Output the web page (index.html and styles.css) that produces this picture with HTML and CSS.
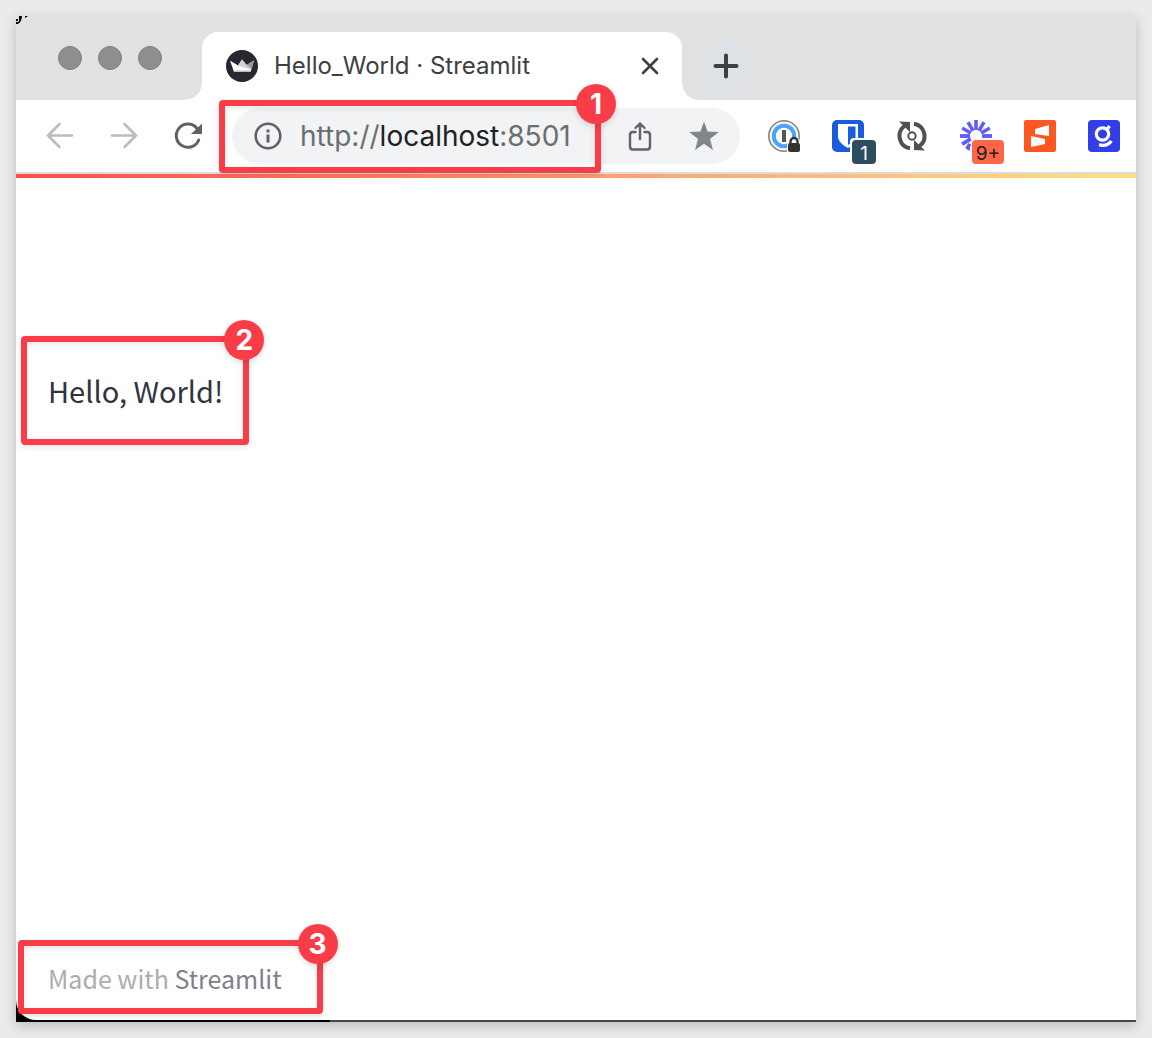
FILE: index.html
```html
<!DOCTYPE html>
<html lang="en">
<head>
<meta charset="utf-8">
<meta name="viewport" content="width=device-width, initial-scale=1">
<title>Hello_World · Streamlit</title>
<link rel="stylesheet" href="styles.css">
</head>
<body>
<div class="window">
  <svg class="window-corner" viewBox="0 0 14 12" aria-hidden="true"><path d="M0 0h14Q3 1 0 12Z" fill="#e4e4e4"/><path d="M3 0h3q0 5-4 8H0V6h2q2-1 1-3ZM0 3h2v2H0ZM9 0h3L9 2Z" fill="#000"/></svg>
  <header class="tab-strip">
    <div class="window-controls">
      <button class="dot" aria-label="Close window"></button>
      <button class="dot" aria-label="Minimize window"></button>
      <button class="dot" aria-label="Zoom window"></button>
    </div>
    <div class="tab">
      <svg class="favicon" viewBox="0 0 32 32" aria-hidden="true"><circle cx="16" cy="16" r="16" fill="#262730"/><path d="M4 10.500 12 15.500 16 9.500 20.500 15 28 10.500 24.500 22H8Z" fill="#fff"/><path d="M16 9.500 20.500 15 26 20 12 15.500Z" fill="#d2d2d2"/><path d="M20.500 15 28 10.500 25.500 19Z" fill="#98989c"/><path d="M8 20.500h17L24.500 22H8.500Z" fill="#b9c0bd"/></svg>
      <span class="tab-title">Hello_World · Streamlit</span>
      <button class="icon-button tab-close" aria-label="Close tab"><svg viewBox="0 0 32 32"><path d="M9 9l14 14M23 9 9 23" stroke="#3c4043" stroke-width="2.600" stroke-linecap="round"/></svg></button>
    </div>
    <button class="new-tab" aria-label="New tab"><svg viewBox="0 0 32 32"><path d="M16 5.500v21M5.500 16h21" stroke="#3c4043" stroke-width="4" stroke-linecap="round"/></svg></button>
  </header>
  <nav class="toolbar">
    <div class="nav-buttons">
      <button class="icon-button" aria-label="Back"><svg viewBox="0 0 32 32"><path d="M28 15.500H4M15.500 4 4 15.500 15.500 27" fill="none" stroke="#babcbe" stroke-width="2.600" stroke-linecap="round" stroke-linejoin="round"/></svg></button>
      <button class="icon-button" aria-label="Forward"><svg viewBox="0 0 32 32"><path d="M4 15.500H28M16.500 4 28 15.500 16.500 27" fill="none" stroke="#babcbe" stroke-width="2.600" stroke-linecap="round" stroke-linejoin="round"/></svg></button>
      <button class="icon-button" aria-label="Reload"><svg viewBox="0 0 32 32"><path d="M26.700 20A11.600 11.600 0 1 1 25 8.500" fill="none" stroke="#5f6368" stroke-width="3" stroke-linecap="round"/><path d="M30 3.500V14H19Z" fill="#5f6368"/></svg></button>
    </div>
    <div class="omnibox">
      <svg class="info" viewBox="0 0 28 28" aria-hidden="true"><circle cx="14" cy="14" r="12.300" fill="none" stroke="#5f6368" stroke-width="2.600"/><path d="M12.500 7.500h3v3h-3Zm0 5h3v8h-3Z" fill="#5f6368"/></svg>
      <div class="url" contenteditable="true" role="textbox" aria-label="Address" spellcheck="false">http://<span class="url-host">localhost</span>:8501</div>
      <button class="icon-button" aria-label="Share"><svg viewBox="0 0 32 32"><path d="M11.500 12H9q-3 0-3 3v11.500q0 3 3 3h14q3 0 3-3V15q0-3-3-3h-2.500M16 19V3.500M11.500 8 16 3.500 20.500 8" fill="none" stroke="#5f6368" stroke-width="2.400" stroke-linecap="round" stroke-linejoin="round"/></svg></button>
      <button class="icon-button" aria-label="Bookmark"><svg viewBox="0 0 32 32"><path d="M16 1.500 19.500 11.500 30.800 12 22 19 25 30 16 23.700 7 30 10 19 1.200 12 12.500 11.500Z" fill="#80868b"/></svg></button>
      <div class="callout callout-url"><span class="callout-number">1</span></div>
    </div>
    <div class="extensions">
      <button class="icon-button" aria-label="Password manager"><svg viewBox="0 0 32 32"><circle cx="16" cy="16" r="15.200" fill="#f4f4f4" stroke="#858585" stroke-width="1.600"/><circle cx="16" cy="16" r="10.200" fill="#fff" stroke="#4aa3ff" stroke-width="4"/><path d="M14 10h4v12h-4Z" fill="#555"/><path d="M19 32V22q1-5 6-5 6 0 7 5v10Z" fill="#fff"/><path d="M22.500 24v-2.500a3.500 3.500 0 0 1 7 0V24" fill="none" stroke="#333" stroke-width="2.400"/><rect x="20" y="23" width="12" height="9" rx="2" fill="#333"/></svg></button>
      <button class="icon-button" aria-label="Vault"><svg viewBox="0 0 32 32"><rect width="32" height="32" rx="5" fill="#195ddc"/><path d="M6 4h20v14q-2 6-10 10Q8 24 6 18Z" fill="#fff"/><path d="M16 6.500h7.500v11Q22 21.500 16 25Z" fill="#195ddc"/><path d="M18 32V22q0-4 4-4h10v14Z" fill="#fff"/></svg><span class="badge badge-vault">1</span></button>
      <button class="icon-button" aria-label="Refresh extension"><svg viewBox="0 0 32 32"><g fill="none" stroke="#505050" stroke-width="4"><path d="M14 28.300A12.500 12.500 0 0 1 8.500 6M18 3.700A12.500 12.500 0 0 1 23.500 26"/><circle cx="16" cy="16" r="3.700" stroke-width="2"/></g><path d="M3 1.500 14 2v10ZM29 30.500 18 30V20Z" fill="#505050"/></svg></button>
      <button class="icon-button" aria-label="Recorder"><svg viewBox="0 0 32 32"><path d="M16 0V10M8 2.200l5 8.600M24 2.200l-5 8.600M2.200 8l8.600 5M29.800 8l-8.600 5M0 16h10M32 16H22M2.200 24l8.600-5M8 29.800l3-5.200M13 30l1-8" stroke="#625df5" stroke-width="3.600"/><path d="M10 30V22q0-4 4-4h18v14Z" fill="#fff"/><path d="M0 16h10M32 16H22M2.200 24l8.600-5M6.800 29l3-5.200" stroke="#625df5" stroke-width="3.600"/></svg><span class="badge badge-recorder">9+</span></button>
      <button class="icon-button" aria-label="Scribe"><svg viewBox="0 0 32 32"><rect width="32" height="32" rx="2" fill="#ff5722"/><path d="M11 9 25 5v11l-14-2ZM7 16l14 3v5L7 27Z" fill="#fff"/></svg></button>
      <button class="icon-button" aria-label="Grepper"><svg viewBox="0 0 32 32"><rect width="32" height="32" rx="4" fill="#333de8"/><g fill="none" stroke="#fff" stroke-width="3.200"><circle cx="14.500" cy="14" r="6.200"/><path d="M19 9.500 21.500 6M11 24.800q8 2 12.500-3.800"/></g></svg></button>
    </div>
  </nav>
  <main class="page">
    <div class="decoration"></div>
    <p class="hello">Hello, World!<span class="callout callout-hello"><span class="callout-number">2</span></span></p>
    <footer class="footer">Made with <a href="https://streamlit.io">Streamlit</a><span class="callout callout-footer"><span class="callout-number">3</span></span></footer>
  </main>
</div>
</body>
</html>
```
FILE: styles.css
```css
* {
  box-sizing: border-box;
}

body {
  display: flex;
  min-height: 100vh;
  margin: 0;
  padding: 16px;
  background: #ebebeb;
  font-family: Inter, "Liberation Sans", sans-serif;
}

button {
  padding: 0;
  border: 0;
  background: none;
  font: inherit;
}

svg {
  display: block;
}

.window {
  position: relative;
  display: flex;
  flex: 1;
  flex-direction: column;
  min-width: 0;
  padding-bottom: 2px;
  background: linear-gradient(to right, #000 314px, #484648 314px);
  box-shadow: 0 4px 12px rgba(0, 0, 0, 0.2);
}

.window-corner {
  position: absolute;
  top: 0;
  left: 0;
  width: 14px;
  height: 12px;
}

.tab-strip {
  display: flex;
  align-items: flex-end;
  height: 84px;
  background: #e1e1e1;
}

.window-controls {
  display: flex;
  gap: 16px;
  padding: 0 40px 30px 42px;
}

.dot {
  width: 24px;
  height: 24px;
  border: 1px solid #808080;
  border-radius: 50%;
  background: #8e8e8e;
}

.tab {
  position: relative;
  display: flex;
  align-items: center;
  gap: 16px;
  flex: 0 1 480px;
  min-width: 0;
  height: 68px;
  padding: 0 16px 0 24px;
  border-radius: 16px 16px 0 0;
  background: #fff;
}

.tab::before,
.tab::after {
  content: "";
  position: absolute;
  bottom: 0;
  width: 16px;
  height: 16px;
}

.tab::before {
  right: 100%;
  background: radial-gradient(circle at 0 0, transparent 15px, #fff 16px);
}

.tab::after {
  left: 100%;
  background: radial-gradient(circle at 100% 0, transparent 15px, #fff 16px);
}

.favicon {
  width: 32px;
  height: 32px;
}

.tab-title {
  flex: 1;
  color: #3c4043;
  font-size: 24px;
  line-height: 32px;
  white-space: nowrap;
}

.icon-button {
  position: relative;
  flex: none;
  width: 32px;
  height: 32px;
}

.new-tab {
  display: grid;
  place-items: center;
  width: 56px;
  height: 56px;
  margin: 0 0 6px 16px;
  border-radius: 50%;
  background: #dee1e6;
}

.new-tab svg {
  width: 32px;
  height: 32px;
}

.toolbar {
  display: flex;
  align-items: center;
  gap: 28px;
  height: 74px;
  padding: 0 16px 0 28px;
  border-bottom: 2px solid #dadce0;
  background: #fff;
}

.nav-buttons,
.extensions {
  display: flex;
  gap: 32px;
}

.omnibox {
  position: relative;
  display: flex;
  flex: 1;
  align-items: center;
  gap: 32px;
  height: 56px;
  padding: 0 20px 0 22px;
  border-radius: 28px;
  background: #f1f3f4;
}

.info {
  width: 28px;
  height: 28px;
  margin-right: -14px;
}

.url {
  flex: 1;
  color: #6b6e71;
  font-size: 28px;
  line-height: 36px;
  white-space: nowrap;
}

.url-host {
  color: #202124;
}

.badge {
  position: absolute;
  top: 20px;
  height: 24px;
  border-radius: 4px;
  font-size: 19px;
  line-height: 28px;
}

.badge-vault {
  left: 20px;
  width: 24px;
  background: #2c4d5e;
  color: #fff;
}

.badge-recorder {
  left: 12px;
  width: 32px;
  background: #ff6549;
  color: #202124;
}

.page {
  display: flex;
  flex: 1;
  flex-direction: column;
  align-items: flex-start;
  padding-bottom: 22px;
  border-bottom-left-radius: 20px;
  background: #fff;
  font-family: "Noto Sans CJK JP", "Noto Sans", sans-serif;
}

.decoration {
  align-self: stretch;
  height: 4px;
  background: linear-gradient(to right, #ff4b4b, #ffa36d 55%, #ffe083);
}

.hello {
  position: relative;
  margin: 190px 32px 64px;
  color: #31333f;
  font-size: 29px;
  line-height: 44px;
}

.footer {
  position: relative;
  margin: auto 32px 0;
  color: #acacb1;
  font-size: 25px;
  line-height: 40px;
}

.footer a {
  color: #808188;
  text-decoration: none;
}

.callout {
  position: absolute;
  border: 6px solid #f83d49;
  border-radius: 4px;
  box-shadow: 0 2px 6px rgba(0, 0, 0, 0.12), inset 0 2px 6px rgba(0, 0, 0, 0.1);
  pointer-events: none;
}

.callout-url {
  top: -8px;
  left: -13px;
  width: 382px;
  height: 73px;
}

.callout-hello {
  inset: -32px -26px -33px -27px;
}

.callout-footer {
  inset: -18px -41px -16px -30px;
}

.callout-number {
  position: absolute;
  top: -22px;
  right: -21px;
  width: 40px;
  height: 40px;
  border-radius: 50%;
  background: #f83d49;
  box-shadow: 0 2px 6px rgba(0, 0, 0, 0.15);
  color: #fff;
  font-family: Inter, "Liberation Sans", sans-serif;
  font-size: 28px;
  font-weight: 700;
  line-height: 40px;
  text-align: center;
}
```
